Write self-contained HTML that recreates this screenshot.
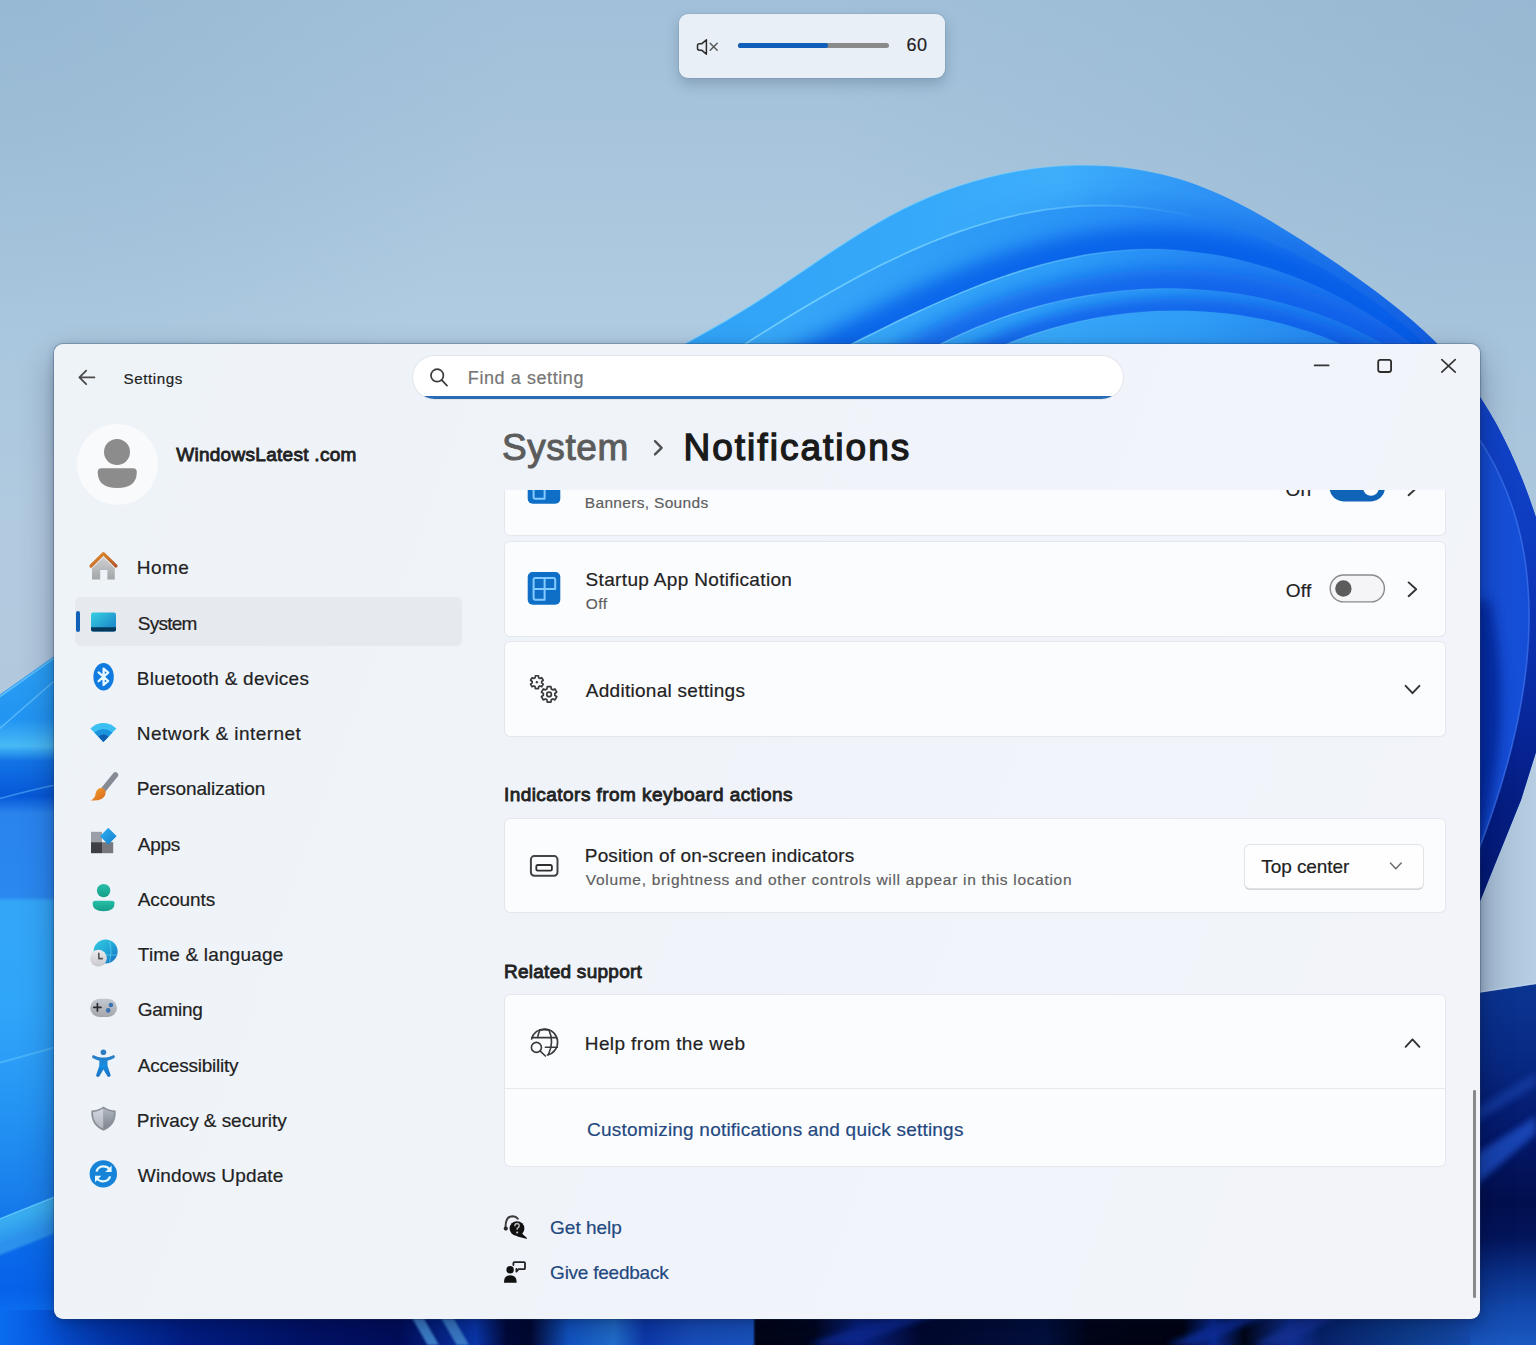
<!DOCTYPE html>
<html lang="en"><head><meta charset="utf-8"><title>Settings - Notifications</title>
<style>
*{box-sizing:border-box;margin:0;padding:0}
html,body{width:1536px;height:1345px;overflow:hidden;background:#a6c3dc}
body{font-family:"Liberation Sans",sans-serif;position:relative}
#root{position:absolute;left:0;top:0;width:1536px;height:1345px;overflow:hidden}
#wall,#ico{position:absolute;left:0;top:0}
.abs{position:absolute}
.t{position:absolute;white-space:nowrap;font-family:"Liberation Sans",sans-serif;-webkit-text-stroke:0.2px currentColor}
.s5{-webkit-text-stroke:0.85px currentColor}
.s10{-webkit-text-stroke:1.0px currentColor}
.s12{-webkit-text-stroke:1.35px currentColor}
#fly{left:679.4px;top:13.5px;width:265.2px;height:64.7px;border-radius:9px;background:#e9eff7;box-shadow:0 0 0 1px rgba(60,80,110,.10),0 6px 14px rgba(20,40,70,.22)}
#trk{left:737.6px;top:42.6px;width:151px;height:5.6px;border-radius:3px;background:#8a8a8a}
#trkf{left:737.6px;top:42.6px;width:90.6px;height:5.6px;border-radius:3px;background:#0f5fb8}
#win{left:54px;top:344px;width:1426px;height:975px;border-radius:9px;background:linear-gradient(110deg,#eef3f8 0%,#f0f4fa 50%,#f2f4fa 100%);box-shadow:0 0 0 1px rgba(40,60,90,.28),0 2px 8px rgba(0,10,40,.22),0 14px 34px rgba(0,10,40,.30)}
#srch{left:412.5px;top:355.5px;width:710px;height:43.5px;border-radius:21.75px;background:#fff;box-shadow:0 0 0 1px rgba(0,0,0,.06);overflow:hidden}
#srch:after{content:"";position:absolute;left:0;right:0;bottom:0;height:3px;background:#2a6ab4}
#ava{left:76.8px;top:423.8px;width:81.4px;height:81.4px;border-radius:50%;background:#f9fafb}
#sel{left:75.4px;top:597.3px;width:386.4px;height:49px;border-radius:6px;background:#e6e9ee}
#acc{left:75.8px;top:610.8px;width:4px;height:21px;border-radius:2px;background:#1060b8}
#clip{left:490px;top:490px;width:990px;height:829px;overflow:hidden}
.card{position:absolute;left:14.5px;width:940.8px;border-radius:5px;background:#fbfcfe;box-shadow:0 0 0 1px #e4e7ec}
#dd{left:1245px;top:844.5px;width:177.8px;height:43px;border-radius:5px;background:#fefefe;box-shadow:0 0 0 1px #e2e4e8,0 1.2px 0 0.6px #c8cacf}
#sb{left:1473.2px;top:1090px;width:2.6px;height:207.6px;border-radius:1.3px;background:#8a8a8c}
</style></head><body><div id="root">
<svg id="wall" width="1536" height="1345" viewBox="0 0 1536 1345">
<defs>
<linearGradient id="bg" gradientUnits="userSpaceOnUse" x1="0" y1="0" x2="0" y2="1345"><stop offset="0" stop-color="#a2c0d9"/><stop offset="0.1" stop-color="#a7c4dc"/><stop offset="0.25" stop-color="#b0cce2"/><stop offset="0.45" stop-color="#b2c9de"/><stop offset="0.7" stop-color="#b0c6db"/><stop offset="1" stop-color="#b0c6db"/></linearGradient>
<radialGradient id="bgl" gradientUnits="userSpaceOnUse" cx="0" cy="0" r="520"><stop offset="0" stop-color="#8fb3cf" stop-opacity="0.55"/><stop offset="1" stop-color="#8fb3cf" stop-opacity="0"/></radialGradient>
<radialGradient id="bgr" gradientUnits="userSpaceOnUse" cx="1536" cy="0" r="720"><stop offset="0" stop-color="#8fb1cd" stop-opacity="0.55"/><stop offset="1" stop-color="#8fb1cd" stop-opacity="0"/></radialGradient>
<linearGradient id="gw" gradientUnits="userSpaceOnUse" x1="1470" y1="0" x2="1536" y2="0"><stop offset="0" stop-color="#a2b9d0"/><stop offset="0.5" stop-color="#adc5db"/><stop offset="1" stop-color="#b6cde2"/></linearGradient>
<linearGradient id="g1" gradientUnits="userSpaceOnUse" x1="685" y1="0" x2="1536" y2="0"><stop offset="0" stop-color="#31a3f7"/><stop offset="0.25" stop-color="#35a8f9"/><stop offset="0.44" stop-color="#3eaefb"/><stop offset="0.6" stop-color="#2f96f6"/><stop offset="0.78" stop-color="#2278ee"/><stop offset="0.9" stop-color="#1a5ee2"/><stop offset="1" stop-color="#164fd6"/></linearGradient>
<linearGradient id="g2" gradientUnits="userSpaceOnUse" x1="747" y1="0" x2="1460" y2="0"><stop offset="0" stop-color="#38a8f8"/><stop offset="0.3" stop-color="#2e9cf6"/><stop offset="0.5" stop-color="#2a92f6"/><stop offset="0.7" stop-color="#2080f2"/><stop offset="1" stop-color="#1a66e8"/></linearGradient>
<linearGradient id="g3" gradientUnits="userSpaceOnUse" x1="852" y1="0" x2="1445" y2="0"><stop offset="0" stop-color="#38a8f8"/><stop offset="0.35" stop-color="#2e9ef8"/><stop offset="0.6" stop-color="#2588f4"/><stop offset="1" stop-color="#1a6aea"/></linearGradient>
<linearGradient id="g4" gradientUnits="userSpaceOnUse" x1="945" y1="0" x2="1420" y2="0"><stop offset="0" stop-color="#32a2f7"/><stop offset="0.45" stop-color="#2a96f6"/><stop offset="0.75" stop-color="#1f80f0"/><stop offset="1" stop-color="#1a6eea"/></linearGradient>
<linearGradient id="g5" gradientUnits="userSpaceOnUse" x1="1008" y1="0" x2="1380" y2="0"><stop offset="0" stop-color="#3aaaf8"/><stop offset="0.5" stop-color="#2f9cf6"/><stop offset="1" stop-color="#2080f0"/></linearGradient>
<linearGradient id="sh1" gradientUnits="userSpaceOnUse" x1="950" y1="0" x2="1300" y2="0"><stop offset="0" stop-color="#0a55de" stop-opacity="0"/><stop offset="1" stop-color="#0a55de" stop-opacity="0.45"/></linearGradient>
<linearGradient id="hl" gradientUnits="userSpaceOnUse" x1="700" y1="0" x2="1200" y2="0"><stop offset="0" stop-color="#7ad4ff" stop-opacity="0.9"/><stop offset="0.6" stop-color="#7ad4ff" stop-opacity="0.7"/><stop offset="1" stop-color="#7ad4ff" stop-opacity="0"/></linearGradient>
<filter id="b12" filterUnits="userSpaceOnUse" x="0" y="0" width="1536" height="1345"><feGaussianBlur stdDeviation="12"/></filter>
<filter id="b9" filterUnits="userSpaceOnUse" x="0" y="0" width="1536" height="1345"><feGaussianBlur stdDeviation="9"/></filter>
<filter id="b6" filterUnits="userSpaceOnUse" x="0" y="0" width="1536" height="1345"><feGaussianBlur stdDeviation="6"/></filter>
<filter id="b3" filterUnits="userSpaceOnUse" x="0" y="0" width="1536" height="1345"><feGaussianBlur stdDeviation="3"/></filter>
<filter id="b1" filterUnits="userSpaceOnUse" x="0" y="0" width="1536" height="1345"><feGaussianBlur stdDeviation="1"/></filter>
<clipPath id="c1"><path d="M620.1,382.1C628.4,376.6 637.0,371.2 645.6,366.1C654.2,361.0 663.0,356.0 671.7,351.1C680.5,346.1 689.3,341.3 698.1,336.4C706.9,331.5 715.7,326.6 724.4,321.6C733.1,316.5 741.7,311.3 750.2,306.0C758.7,300.6 767.2,295.1 775.5,289.5C783.9,283.9 792.2,278.2 800.6,272.6C808.9,266.9 817.2,261.2 825.6,255.6C833.9,250.0 842.3,244.5 850.8,239.1C859.2,233.7 867.8,228.5 876.5,223.5C885.1,218.4 893.9,213.6 902.9,209.1C911.9,204.6 921.0,200.4 930.3,196.5C939.6,192.7 949.1,189.1 958.6,185.9C968.2,182.7 977.9,179.9 987.7,177.4C997.5,174.9 1007.4,172.8 1017.4,171.0C1027.3,169.3 1037.3,167.9 1047.3,166.9C1057.3,166.0 1067.4,165.4 1077.4,165.2C1087.5,165.1 1097.5,165.3 1107.4,166.0C1117.4,166.7 1127.3,167.8 1137.2,169.4C1147.0,170.9 1156.8,172.9 1166.4,175.4C1176.1,177.9 1185.6,180.8 1195.0,184.2C1204.4,187.6 1213.7,191.5 1222.8,195.7C1231.9,199.9 1241.0,204.4 1249.9,209.2C1258.8,214.0 1267.6,219.1 1276.3,224.4C1285.0,229.6 1293.7,235.1 1302.2,240.6C1310.7,246.1 1319.2,251.7 1327.6,257.3C1336.0,263.0 1344.3,268.7 1352.5,274.5C1360.7,280.2 1368.8,286.1 1376.7,292.1C1384.7,298.1 1392.6,304.3 1400.3,310.6C1408.0,316.9 1415.6,323.4 1423.0,330.1C1430.4,336.8 1437.5,343.7 1444.3,351.0C1451.1,358.3 1457.5,365.9 1463.6,373.8C1469.7,381.7 1475.5,389.9 1480.9,398.3C1486.4,406.7 1491.5,415.3 1496.4,424.1C1501.2,433.0 1505.8,442.0 1510.0,451.1C1514.3,460.3 1518.3,469.6 1522.1,479.0C1525.9,488.4 1529.4,497.9 1532.6,507.4C1535.9,517.0 1539.0,526.6 1541.8,536.2C1544.6,545.8 1547.3,555.4 1549.7,565.0L1560,1100L620,1100Z"/></clipPath>
<clipPath id="c2"><path d="M691.2,378.7C697.2,374.9 703.1,371.1 709.1,367.2C715.1,363.3 721.2,359.4 727.2,355.5C733.3,351.6 739.4,347.7 745.6,343.8C751.7,339.8 757.9,335.9 764.1,332.0C770.4,328.1 776.6,324.2 782.9,320.3C789.2,316.4 795.5,312.5 801.9,308.7C808.3,304.9 814.7,301.1 821.1,297.4C827.5,293.7 834.0,290.0 840.5,286.4C847.0,282.8 853.6,279.2 860.1,275.7C866.7,272.3 873.3,268.9 880.0,265.5C886.6,262.2 893.3,259.0 900.0,255.9C906.7,252.8 913.4,249.8 920.2,246.9C927.0,243.9 933.8,241.2 940.6,238.5C947.5,235.8 954.3,233.3 961.2,230.9C968.1,228.5 975.1,226.3 982.0,224.2C989.0,222.1 996.0,220.1 1003.0,218.3C1010.1,216.5 1017.1,214.9 1024.2,213.5C1031.3,212.1 1038.4,210.8 1045.6,209.7C1052.7,208.7 1059.9,207.8 1067.1,207.1C1074.3,206.5 1081.6,206.0 1088.8,205.7C1096.1,205.5 1103.4,205.5 1110.7,205.7C1118.0,205.8 1125.4,206.2 1132.7,206.9C1140.0,207.5 1147.4,208.3 1154.7,209.3C1162.1,210.3 1169.4,211.5 1176.7,212.9C1184.0,214.3 1191.2,215.9 1198.5,217.7C1205.7,219.5 1212.9,221.4 1220.0,223.6C1227.1,225.7 1234.2,228.0 1241.2,230.5C1248.2,233.0 1255.1,235.6 1262.0,238.4C1268.8,241.2 1275.6,244.1 1282.3,247.2C1289.0,250.3 1295.5,253.5 1302.1,256.9C1308.6,260.3 1315.0,263.8 1321.4,267.5C1327.7,271.1 1334.0,274.9 1340.2,278.8C1346.4,282.7 1352.5,286.7 1358.6,290.8C1364.6,295.0 1370.6,299.2 1376.5,303.5C1382.4,307.9 1388.2,312.3 1393.9,316.9C1399.7,321.4 1405.4,326.1 1411.0,330.8C1416.6,335.5 1422.1,340.3 1427.5,345.2C1433.0,350.1 1438.4,355.0 1443.7,360.1C1449.0,365.1 1454.3,370.2 1459.5,375.3L1460,1100L690,1100Z"/></clipPath>
<clipPath id="c3"><path d="M790.5,375.1C795.8,372.5 801.0,369.9 806.3,367.2C811.6,364.5 816.9,361.8 822.3,359.1C827.6,356.4 833.0,353.6 838.4,350.9C843.7,348.1 849.1,345.4 854.6,342.7C860.0,339.9 865.4,337.2 870.9,334.5C876.3,331.7 881.8,329.0 887.3,326.3C892.8,323.6 898.4,321.0 903.9,318.3C909.4,315.7 915.0,313.1 920.6,310.5C926.2,307.9 931.8,305.4 937.4,302.9C943.0,300.4 948.6,298.0 954.3,295.6C959.9,293.2 965.6,290.9 971.3,288.6C977.0,286.3 982.7,284.1 988.4,282.0C994.2,279.9 999.9,277.9 1005.7,275.9C1011.4,273.9 1017.2,272.1 1023.0,270.3C1028.8,268.5 1034.6,266.8 1040.5,265.2C1046.3,263.6 1052.2,262.1 1058.0,260.7C1063.9,259.3 1069.8,258.1 1075.7,256.9C1081.6,255.7 1087.5,254.7 1093.4,253.8C1099.4,252.9 1105.3,252.1 1111.3,251.5C1117.3,250.8 1123.2,250.3 1129.2,249.9C1135.2,249.6 1141.2,249.4 1147.3,249.3C1153.3,249.2 1159.4,249.3 1165.4,249.6C1171.5,249.8 1177.5,250.2 1183.6,250.7C1189.6,251.3 1195.7,251.9 1201.7,252.8C1207.7,253.6 1213.8,254.5 1219.8,255.6C1225.8,256.7 1231.8,258.0 1237.8,259.3C1243.7,260.7 1249.7,262.2 1255.6,263.9C1261.5,265.5 1267.3,267.3 1273.2,269.2C1279.0,271.0 1284.8,273.1 1290.5,275.2C1296.2,277.4 1301.9,279.6 1307.5,282.0C1313.2,284.4 1318.7,286.9 1324.2,289.5C1329.7,292.2 1335.1,294.9 1340.5,297.7C1345.9,300.6 1351.2,303.5 1356.4,306.6C1361.7,309.6 1366.8,312.8 1372.0,316.0C1377.1,319.2 1382.1,322.6 1387.2,326.0C1392.2,329.4 1397.1,332.9 1402.0,336.4C1406.9,340.0 1411.7,343.6 1416.5,347.3C1421.3,351.0 1426.0,354.8 1430.7,358.6C1435.4,362.5 1440.0,366.3 1444.5,370.3L1445,1100L790,1100Z"/></clipPath>
<clipPath id="c4"><path d="M890.4,373.2C894.4,370.5 898.5,368.0 902.6,365.4C906.7,362.9 910.9,360.4 915.0,358.0C919.2,355.6 923.4,353.2 927.7,350.9C931.9,348.6 936.2,346.4 940.5,344.2C944.8,342.0 949.1,339.9 953.5,337.9C957.8,335.8 962.2,333.8 966.7,331.9C971.1,329.9 975.5,328.0 980.0,326.2C984.5,324.4 989.0,322.7 993.5,321.0C998.0,319.3 1002.5,317.6 1007.1,316.1C1011.6,314.5 1016.2,313.0 1020.8,311.6C1025.4,310.1 1030.0,308.8 1034.7,307.5C1039.3,306.2 1044.0,304.9 1048.6,303.7C1053.3,302.6 1058.0,301.5 1062.7,300.4C1067.4,299.4 1072.1,298.4 1076.8,297.5C1081.5,296.6 1086.2,295.7 1091.0,295.0C1095.7,294.2 1100.4,293.5 1105.2,292.9C1110.0,292.2 1114.7,291.7 1119.5,291.2C1124.2,290.7 1129.0,290.2 1133.8,289.9C1138.5,289.5 1143.3,289.2 1148.1,289.0C1152.9,288.8 1157.6,288.7 1162.4,288.6C1167.2,288.5 1172.0,288.5 1176.7,288.6C1181.5,288.7 1186.3,288.8 1191.0,289.1C1195.8,289.3 1200.6,289.6 1205.3,290.0C1210.1,290.3 1214.8,290.8 1219.5,291.3C1224.3,291.8 1229.0,292.4 1233.7,293.1C1238.4,293.8 1243.1,294.5 1247.8,295.3C1252.5,296.2 1257.2,297.1 1261.9,298.0C1266.5,299.0 1271.2,300.1 1275.8,301.2C1280.4,302.3 1285.0,303.6 1289.6,304.9C1294.2,306.1 1298.8,307.5 1303.4,309.0C1307.9,310.4 1312.5,311.9 1317.0,313.5C1321.5,315.1 1326.0,316.8 1330.4,318.6C1334.9,320.4 1339.3,322.2 1343.8,324.1C1348.2,326.1 1352.6,328.1 1356.9,330.2C1361.3,332.3 1365.6,334.4 1369.9,336.7C1374.2,338.9 1378.5,341.3 1382.7,343.7C1386.9,346.1 1391.1,348.6 1395.3,351.2C1399.5,353.8 1403.6,356.5 1407.7,359.2C1411.8,362.0 1415.8,364.8 1419.9,367.7L1420,1100L890,1100Z"/></clipPath>
<clipPath id="cR"><path d="M620.1,382.1C628.4,376.6 637.0,371.2 645.6,366.1C654.2,361.0 663.0,356.0 671.7,351.1C680.5,346.1 689.3,341.3 698.1,336.4C706.9,331.5 715.7,326.6 724.4,321.6C733.1,316.5 741.7,311.3 750.2,306.0C758.7,300.6 767.2,295.1 775.5,289.5C783.9,283.9 792.2,278.2 800.6,272.6C808.9,266.9 817.2,261.2 825.6,255.6C833.9,250.0 842.3,244.5 850.8,239.1C859.2,233.7 867.8,228.5 876.5,223.5C885.1,218.4 893.9,213.6 902.9,209.1C911.9,204.6 921.0,200.4 930.3,196.5C939.6,192.7 949.1,189.1 958.6,185.9C968.2,182.7 977.9,179.9 987.7,177.4C997.5,174.9 1007.4,172.8 1017.4,171.0C1027.3,169.3 1037.3,167.9 1047.3,166.9C1057.3,166.0 1067.4,165.4 1077.4,165.2C1087.5,165.1 1097.5,165.3 1107.4,166.0C1117.4,166.7 1127.3,167.8 1137.2,169.4C1147.0,170.9 1156.8,172.9 1166.4,175.4C1176.1,177.9 1185.6,180.8 1195.0,184.2C1204.4,187.6 1213.7,191.5 1222.8,195.7C1231.9,199.9 1241.0,204.4 1249.9,209.2C1258.8,214.0 1267.6,219.1 1276.3,224.4C1285.0,229.6 1293.7,235.1 1302.2,240.6C1310.7,246.1 1319.2,251.7 1327.6,257.3C1336.0,263.0 1344.3,268.7 1352.5,274.5C1360.7,280.2 1368.8,286.1 1376.7,292.1C1384.7,298.1 1392.6,304.3 1400.3,310.6C1408.0,316.9 1415.6,323.4 1423.0,330.1C1430.4,336.8 1437.5,343.7 1444.3,351.0C1451.1,358.3 1457.5,365.9 1463.6,373.8C1469.7,381.7 1475.5,389.9 1480.9,398.3C1486.4,406.7 1491.5,415.3 1496.4,424.1C1501.2,433.0 1505.8,442.0 1510.0,451.1C1514.3,460.3 1518.3,469.6 1522.1,479.0C1525.9,488.4 1529.4,497.9 1532.6,507.4C1535.9,517.0 1539.0,526.6 1541.8,536.2C1544.6,545.8 1547.3,555.4 1549.7,565.0L1560,745L1536,752L1521,800L1481,899L1470,925L1400,925L1400,344Z"/></clipPath>
<linearGradient id="gl" gradientUnits="userSpaceOnUse" x1="0" y1="650" x2="0" y2="1345"><stop offset="0" stop-color="#2ba2f5"/><stop offset="0.1" stop-color="#2294f2"/><stop offset="0.138" stop-color="#48baf6"/><stop offset="0.16" stop-color="#1273e6"/><stop offset="0.21" stop-color="#0758d8"/><stop offset="0.235" stop-color="#2a84ee"/><stop offset="0.355" stop-color="#2a88f0"/><stop offset="0.362" stop-color="#34a6f8"/><stop offset="0.5" stop-color="#30a6f9"/><stop offset="0.58" stop-color="#2c9ef7"/><stop offset="0.66" stop-color="#2494f4"/><stop offset="0.78" stop-color="#1a80ec"/><stop offset="0.86" stop-color="#0a6aea"/><stop offset="0.92" stop-color="#0762ea"/><stop offset="0.95" stop-color="#0a6cf0"/><stop offset="1" stop-color="#0a6cf0"/></linearGradient>
<linearGradient id="gcy" gradientUnits="userSpaceOnUse" x1="0" y1="1200" x2="14" y2="1240"><stop offset="0" stop-color="#4cc4f6"/><stop offset="0.5" stop-color="#3eb4f2"/><stop offset="1" stop-color="#2f96ee"/></linearGradient>
<linearGradient id="gll" gradientUnits="userSpaceOnUse" x1="0" y1="0" x2="60" y2="0"><stop offset="0" stop-color="#000a50" stop-opacity="0"/><stop offset="0.6" stop-color="#000a50" stop-opacity="0"/><stop offset="1" stop-color="#000a50" stop-opacity="0.22"/></linearGradient>
<linearGradient id="grv" gradientUnits="userSpaceOnUse" x1="0" y1="380" x2="0" y2="900"><stop offset="0" stop-color="#1246cc"/><stop offset="0.3" stop-color="#0e3cc0"/><stop offset="0.6" stop-color="#092aa2"/><stop offset="0.8" stop-color="#051e84"/><stop offset="1" stop-color="#041a74"/></linearGradient>
<linearGradient id="gr" gradientUnits="userSpaceOnUse" x1="1480" y1="0" x2="1530" y2="0"><stop offset="0" stop-color="#144cd2"/><stop offset="0.5" stop-color="#1650d8"/><stop offset="1" stop-color="#154ed6"/></linearGradient>
<linearGradient id="gn" gradientUnits="userSpaceOnUse" x1="0" y1="985" x2="0" y2="1345"><stop offset="0" stop-color="#0b3592"/><stop offset="0.2" stop-color="#082a84"/><stop offset="0.42" stop-color="#04186a"/><stop offset="0.6" stop-color="#020f4e"/><stop offset="0.7" stop-color="#03145a"/><stop offset="0.8" stop-color="#0a3088"/><stop offset="0.9" stop-color="#1248ac"/><stop offset="1" stop-color="#1a58c0"/></linearGradient>
<linearGradient id="gb" gradientUnits="userSpaceOnUse" x1="0" y1="0" x2="1536" y2="0"><stop offset="0" stop-color="#0a6cf0"/><stop offset="0.03" stop-color="#0658e0"/><stop offset="0.07" stop-color="#0338b4"/><stop offset="0.12" stop-color="#021f8a"/><stop offset="0.2" stop-color="#01126a"/><stop offset="0.26" stop-color="#010e5e"/><stop offset="0.31" stop-color="#0a3ab4"/><stop offset="0.33" stop-color="#02093a"/><stop offset="0.345" stop-color="#020830"/><stop offset="0.37" stop-color="#1258cc"/><stop offset="0.4" stop-color="#2474d6"/><stop offset="0.42" stop-color="#0d3cb4"/><stop offset="0.45" stop-color="#1a52c4"/><stop offset="0.49" stop-color="#1a58c8"/><stop offset="0.492" stop-color="#010414"/><stop offset="0.53" stop-color="#02061c"/><stop offset="0.56" stop-color="#0a2488"/><stop offset="0.6" stop-color="#02082e"/><stop offset="0.68" stop-color="#03103e"/><stop offset="0.71" stop-color="#010416"/><stop offset="0.77" stop-color="#01030f"/><stop offset="0.79" stop-color="#0d2e9c"/><stop offset="0.81" stop-color="#010514"/><stop offset="0.84" stop-color="#12349c"/><stop offset="0.86" stop-color="#07246e"/><stop offset="0.92" stop-color="#0f4296"/><stop offset="0.957" stop-color="#164eb4"/><stop offset="1" stop-color="#1a58c0"/></linearGradient>
</defs>
<rect width="1536" height="1345" fill="url(#bg)"/>
<rect width="1536" height="1345" fill="url(#bgl)"/>
<rect width="1536" height="1345" fill="url(#bgr)"/>
<rect x="1470" y="700" width="66" height="300" fill="url(#gw)"/>
<path d="M-5,698 L60,652 L60,1345 L-5,1345Z" fill="url(#gl)"/>
<path d="M-5,700 L60,654" stroke="#7fd0ff" stroke-width="1.5" opacity="0.7" fill="none"/>
<path d="M-5,732.5 L60,676" stroke="#6cc6ff" stroke-width="1.5" opacity="0.7" fill="none"/>
<path d="M-5,800 Q30,790 60,784" stroke="#58b4fb" stroke-width="1.5" opacity="0.6" fill="none"/>
<path d="M-5,1064 L60,1046" stroke="#58c0fb" stroke-width="2" opacity="0.6" fill="none"/>
<path d="M-5,1221 L60,1195 L60,1231 L-5,1257Z" fill="url(#gcy)" opacity="0.9" filter="url(#b1)"/>
<path d="M-5,1221 L60,1195" stroke="#6ad4ff" stroke-width="1.6" opacity="0.8"/>
<path d="M620.1,382.1C628.4,376.6 637.0,371.2 645.6,366.1C654.2,361.0 663.0,356.0 671.7,351.1C680.5,346.1 689.3,341.3 698.1,336.4C706.9,331.5 715.7,326.6 724.4,321.6C733.1,316.5 741.7,311.3 750.2,306.0C758.7,300.6 767.2,295.1 775.5,289.5C783.9,283.9 792.2,278.2 800.6,272.6C808.9,266.9 817.2,261.2 825.6,255.6C833.9,250.0 842.3,244.5 850.8,239.1C859.2,233.7 867.8,228.5 876.5,223.5C885.1,218.4 893.9,213.6 902.9,209.1C911.9,204.6 921.0,200.4 930.3,196.5C939.6,192.7 949.1,189.1 958.6,185.9C968.2,182.7 977.9,179.9 987.7,177.4C997.5,174.9 1007.4,172.8 1017.4,171.0C1027.3,169.3 1037.3,167.9 1047.3,166.9C1057.3,166.0 1067.4,165.4 1077.4,165.2C1087.5,165.1 1097.5,165.3 1107.4,166.0C1117.4,166.7 1127.3,167.8 1137.2,169.4C1147.0,170.9 1156.8,172.9 1166.4,175.4C1176.1,177.9 1185.6,180.8 1195.0,184.2C1204.4,187.6 1213.7,191.5 1222.8,195.7C1231.9,199.9 1241.0,204.4 1249.9,209.2C1258.8,214.0 1267.6,219.1 1276.3,224.4C1285.0,229.6 1293.7,235.1 1302.2,240.6C1310.7,246.1 1319.2,251.7 1327.6,257.3C1336.0,263.0 1344.3,268.7 1352.5,274.5C1360.7,280.2 1368.8,286.1 1376.7,292.1C1384.7,298.1 1392.6,304.3 1400.3,310.6C1408.0,316.9 1415.6,323.4 1423.0,330.1C1430.4,336.8 1437.5,343.7 1444.3,351.0C1451.1,358.3 1457.5,365.9 1463.6,373.8C1469.7,381.7 1475.5,389.9 1480.9,398.3C1486.4,406.7 1491.5,415.3 1496.4,424.1C1501.2,433.0 1505.8,442.0 1510.0,451.1C1514.3,460.3 1518.3,469.6 1522.1,479.0C1525.9,488.4 1529.4,497.9 1532.6,507.4C1535.9,517.0 1539.0,526.6 1541.8,536.2C1544.6,545.8 1547.3,555.4 1549.7,565.0L1560,745L1536,752L1521,800L1481,899L1470,925L620,925Z" fill="url(#g1)"/>
<path d="M620.1,382.1C628.4,376.6 637.0,371.2 645.6,366.1C654.2,361.0 663.0,356.0 671.7,351.1C680.5,346.1 689.3,341.3 698.1,336.4C706.9,331.5 715.7,326.6 724.4,321.6C733.1,316.5 741.7,311.3 750.2,306.0C758.7,300.6 767.2,295.1 775.5,289.5C783.9,283.9 792.2,278.2 800.6,272.6C808.9,266.9 817.2,261.2 825.6,255.6C833.9,250.0 842.3,244.5 850.8,239.1C859.2,233.7 867.8,228.5 876.5,223.5C885.1,218.4 893.9,213.6 902.9,209.1C911.9,204.6 921.0,200.4 930.3,196.5C939.6,192.7 949.1,189.1 958.6,185.9C968.2,182.7 977.9,179.9 987.7,177.4C997.5,174.9 1007.4,172.8 1017.4,171.0C1027.3,169.3 1037.3,167.9 1047.3,166.9C1057.3,166.0 1067.4,165.4 1077.4,165.2C1087.5,165.1 1097.5,165.3 1107.4,166.0C1117.4,166.7 1127.3,167.8 1137.2,169.4C1147.0,170.9 1156.8,172.9 1166.4,175.4C1176.1,177.9 1185.6,180.8 1195.0,184.2C1204.4,187.6 1213.7,191.5 1222.8,195.7C1231.9,199.9 1241.0,204.4 1249.9,209.2C1258.8,214.0 1267.6,219.1 1276.3,224.4C1285.0,229.6 1293.7,235.1 1302.2,240.6C1310.7,246.1 1319.2,251.7 1327.6,257.3C1336.0,263.0 1344.3,268.7 1352.5,274.5C1360.7,280.2 1368.8,286.1 1376.7,292.1C1384.7,298.1 1392.6,304.3 1400.3,310.6C1408.0,316.9 1415.6,323.4 1423.0,330.1C1430.4,336.8 1437.5,343.7 1444.3,351.0C1451.1,358.3 1457.5,365.9 1463.6,373.8C1469.7,381.7 1475.5,389.9 1480.9,398.3C1486.4,406.7 1491.5,415.3 1496.4,424.1C1501.2,433.0 1505.8,442.0 1510.0,451.1C1514.3,460.3 1518.3,469.6 1522.1,479.0C1525.9,488.4 1529.4,497.9 1532.6,507.4C1535.9,517.0 1539.0,526.6 1541.8,536.2C1544.6,545.8 1547.3,555.4 1549.7,565.0" stroke="url(#hl)" stroke-width="1.4" fill="none" opacity="0.7"/>
<g clip-path="url(#c1)"><path d="M691.2,378.7C697.2,374.9 703.1,371.1 709.1,367.2C715.1,363.3 721.2,359.4 727.2,355.5C733.3,351.6 739.4,347.7 745.6,343.8C751.7,339.8 757.9,335.9 764.1,332.0C770.4,328.1 776.6,324.2 782.9,320.3C789.2,316.4 795.5,312.5 801.9,308.7C808.3,304.9 814.7,301.1 821.1,297.4C827.5,293.7 834.0,290.0 840.5,286.4C847.0,282.8 853.6,279.2 860.1,275.7C866.7,272.3 873.3,268.9 880.0,265.5C886.6,262.2 893.3,259.0 900.0,255.9C906.7,252.8 913.4,249.8 920.2,246.9C927.0,243.9 933.8,241.2 940.6,238.5C947.5,235.8 954.3,233.3 961.2,230.9C968.1,228.5 975.1,226.3 982.0,224.2C989.0,222.1 996.0,220.1 1003.0,218.3C1010.1,216.5 1017.1,214.9 1024.2,213.5C1031.3,212.1 1038.4,210.8 1045.6,209.7C1052.7,208.7 1059.9,207.8 1067.1,207.1C1074.3,206.5 1081.6,206.0 1088.8,205.7C1096.1,205.5 1103.4,205.5 1110.7,205.7C1118.0,205.8 1125.4,206.2 1132.7,206.9C1140.0,207.5 1147.4,208.3 1154.7,209.3C1162.1,210.3 1169.4,211.5 1176.7,212.9C1184.0,214.3 1191.2,215.9 1198.5,217.7C1205.7,219.5 1212.9,221.4 1220.0,223.6C1227.1,225.7 1234.2,228.0 1241.2,230.5C1248.2,233.0 1255.1,235.6 1262.0,238.4C1268.8,241.2 1275.6,244.1 1282.3,247.2C1289.0,250.3 1295.5,253.5 1302.1,256.9C1308.6,260.3 1315.0,263.8 1321.4,267.5C1327.7,271.1 1334.0,274.9 1340.2,278.8C1346.4,282.7 1352.5,286.7 1358.6,290.8C1364.6,295.0 1370.6,299.2 1376.5,303.5C1382.4,307.9 1388.2,312.3 1393.9,316.9C1399.7,321.4 1405.4,326.1 1411.0,330.8C1416.6,335.5 1422.1,340.3 1427.5,345.2C1433.0,350.1 1438.4,355.0 1443.7,360.1C1449.0,365.1 1454.3,370.2 1459.5,375.3" stroke="url(#sh1)" stroke-width="22" fill="none" filter="url(#b9)"/></g>
<path d="M691.2,378.7C697.2,374.9 703.1,371.1 709.1,367.2C715.1,363.3 721.2,359.4 727.2,355.5C733.3,351.6 739.4,347.7 745.6,343.8C751.7,339.8 757.9,335.9 764.1,332.0C770.4,328.1 776.6,324.2 782.9,320.3C789.2,316.4 795.5,312.5 801.9,308.7C808.3,304.9 814.7,301.1 821.1,297.4C827.5,293.7 834.0,290.0 840.5,286.4C847.0,282.8 853.6,279.2 860.1,275.7C866.7,272.3 873.3,268.9 880.0,265.5C886.6,262.2 893.3,259.0 900.0,255.9C906.7,252.8 913.4,249.8 920.2,246.9C927.0,243.9 933.8,241.2 940.6,238.5C947.5,235.8 954.3,233.3 961.2,230.9C968.1,228.5 975.1,226.3 982.0,224.2C989.0,222.1 996.0,220.1 1003.0,218.3C1010.1,216.5 1017.1,214.9 1024.2,213.5C1031.3,212.1 1038.4,210.8 1045.6,209.7C1052.7,208.7 1059.9,207.8 1067.1,207.1C1074.3,206.5 1081.6,206.0 1088.8,205.7C1096.1,205.5 1103.4,205.5 1110.7,205.7C1118.0,205.8 1125.4,206.2 1132.7,206.9C1140.0,207.5 1147.4,208.3 1154.7,209.3C1162.1,210.3 1169.4,211.5 1176.7,212.9C1184.0,214.3 1191.2,215.9 1198.5,217.7C1205.7,219.5 1212.9,221.4 1220.0,223.6C1227.1,225.7 1234.2,228.0 1241.2,230.5C1248.2,233.0 1255.1,235.6 1262.0,238.4C1268.8,241.2 1275.6,244.1 1282.3,247.2C1289.0,250.3 1295.5,253.5 1302.1,256.9C1308.6,260.3 1315.0,263.8 1321.4,267.5C1327.7,271.1 1334.0,274.9 1340.2,278.8C1346.4,282.7 1352.5,286.7 1358.6,290.8C1364.6,295.0 1370.6,299.2 1376.5,303.5C1382.4,307.9 1388.2,312.3 1393.9,316.9C1399.7,321.4 1405.4,326.1 1411.0,330.8C1416.6,335.5 1422.1,340.3 1427.5,345.2C1433.0,350.1 1438.4,355.0 1443.7,360.1C1449.0,365.1 1454.3,370.2 1459.5,375.3L1460,600L690,600Z" fill="url(#g2)"/>
<g clip-path="url(#c2)"><path d="M790.5,375.1C795.8,372.5 801.0,369.9 806.3,367.2C811.6,364.5 816.9,361.8 822.3,359.1C827.6,356.4 833.0,353.6 838.4,350.9C843.7,348.1 849.1,345.4 854.6,342.7C860.0,339.9 865.4,337.2 870.9,334.5C876.3,331.7 881.8,329.0 887.3,326.3C892.8,323.6 898.4,321.0 903.9,318.3C909.4,315.7 915.0,313.1 920.6,310.5C926.2,307.9 931.8,305.4 937.4,302.9C943.0,300.4 948.6,298.0 954.3,295.6C959.9,293.2 965.6,290.9 971.3,288.6C977.0,286.3 982.7,284.1 988.4,282.0C994.2,279.9 999.9,277.9 1005.7,275.9C1011.4,273.9 1017.2,272.1 1023.0,270.3C1028.8,268.5 1034.6,266.8 1040.5,265.2C1046.3,263.6 1052.2,262.1 1058.0,260.7C1063.9,259.3 1069.8,258.1 1075.7,256.9C1081.6,255.7 1087.5,254.7 1093.4,253.8C1099.4,252.9 1105.3,252.1 1111.3,251.5C1117.3,250.8 1123.2,250.3 1129.2,249.9C1135.2,249.6 1141.2,249.4 1147.3,249.3C1153.3,249.2 1159.4,249.3 1165.4,249.6C1171.5,249.8 1177.5,250.2 1183.6,250.7C1189.6,251.3 1195.7,251.9 1201.7,252.8C1207.7,253.6 1213.8,254.5 1219.8,255.6C1225.8,256.7 1231.8,258.0 1237.8,259.3C1243.7,260.7 1249.7,262.2 1255.6,263.9C1261.5,265.5 1267.3,267.3 1273.2,269.2C1279.0,271.0 1284.8,273.1 1290.5,275.2C1296.2,277.4 1301.9,279.6 1307.5,282.0C1313.2,284.4 1318.7,286.9 1324.2,289.5C1329.7,292.2 1335.1,294.9 1340.5,297.7C1345.9,300.6 1351.2,303.5 1356.4,306.6C1361.7,309.6 1366.8,312.8 1372.0,316.0C1377.1,319.2 1382.1,322.6 1387.2,326.0C1392.2,329.4 1397.1,332.9 1402.0,336.4C1406.9,340.0 1411.7,343.6 1416.5,347.3C1421.3,351.0 1426.0,354.8 1430.7,358.6C1435.4,362.5 1440.0,366.3 1444.5,370.3" stroke="#0658e6" stroke-width="44" fill="none" filter="url(#b9)" opacity="0.78"/></g>
<path d="M691.2,378.7C697.2,374.9 703.1,371.1 709.1,367.2C715.1,363.3 721.2,359.4 727.2,355.5C733.3,351.6 739.4,347.7 745.6,343.8C751.7,339.8 757.9,335.9 764.1,332.0C770.4,328.1 776.6,324.2 782.9,320.3C789.2,316.4 795.5,312.5 801.9,308.7C808.3,304.9 814.7,301.1 821.1,297.4C827.5,293.7 834.0,290.0 840.5,286.4C847.0,282.8 853.6,279.2 860.1,275.7C866.7,272.3 873.3,268.9 880.0,265.5C886.6,262.2 893.3,259.0 900.0,255.9C906.7,252.8 913.4,249.8 920.2,246.9C927.0,243.9 933.8,241.2 940.6,238.5C947.5,235.8 954.3,233.3 961.2,230.9C968.1,228.5 975.1,226.3 982.0,224.2C989.0,222.1 996.0,220.1 1003.0,218.3C1010.1,216.5 1017.1,214.9 1024.2,213.5C1031.3,212.1 1038.4,210.8 1045.6,209.7C1052.7,208.7 1059.9,207.8 1067.1,207.1C1074.3,206.5 1081.6,206.0 1088.8,205.7C1096.1,205.5 1103.4,205.5 1110.7,205.7C1118.0,205.8 1125.4,206.2 1132.7,206.9C1140.0,207.5 1147.4,208.3 1154.7,209.3C1162.1,210.3 1169.4,211.5 1176.7,212.9C1184.0,214.3 1191.2,215.9 1198.5,217.7C1205.7,219.5 1212.9,221.4 1220.0,223.6C1227.1,225.7 1234.2,228.0 1241.2,230.5C1248.2,233.0 1255.1,235.6 1262.0,238.4C1268.8,241.2 1275.6,244.1 1282.3,247.2C1289.0,250.3 1295.5,253.5 1302.1,256.9C1308.6,260.3 1315.0,263.8 1321.4,267.5C1327.7,271.1 1334.0,274.9 1340.2,278.8C1346.4,282.7 1352.5,286.7 1358.6,290.8C1364.6,295.0 1370.6,299.2 1376.5,303.5C1382.4,307.9 1388.2,312.3 1393.9,316.9C1399.7,321.4 1405.4,326.1 1411.0,330.8C1416.6,335.5 1422.1,340.3 1427.5,345.2C1433.0,350.1 1438.4,355.0 1443.7,360.1C1449.0,365.1 1454.3,370.2 1459.5,375.3" stroke="url(#hl)" stroke-width="1.7" fill="none"/>
<path d="M790.5,375.1C795.8,372.5 801.0,369.9 806.3,367.2C811.6,364.5 816.9,361.8 822.3,359.1C827.6,356.4 833.0,353.6 838.4,350.9C843.7,348.1 849.1,345.4 854.6,342.7C860.0,339.9 865.4,337.2 870.9,334.5C876.3,331.7 881.8,329.0 887.3,326.3C892.8,323.6 898.4,321.0 903.9,318.3C909.4,315.7 915.0,313.1 920.6,310.5C926.2,307.9 931.8,305.4 937.4,302.9C943.0,300.4 948.6,298.0 954.3,295.6C959.9,293.2 965.6,290.9 971.3,288.6C977.0,286.3 982.7,284.1 988.4,282.0C994.2,279.9 999.9,277.9 1005.7,275.9C1011.4,273.9 1017.2,272.1 1023.0,270.3C1028.8,268.5 1034.6,266.8 1040.5,265.2C1046.3,263.6 1052.2,262.1 1058.0,260.7C1063.9,259.3 1069.8,258.1 1075.7,256.9C1081.6,255.7 1087.5,254.7 1093.4,253.8C1099.4,252.9 1105.3,252.1 1111.3,251.5C1117.3,250.8 1123.2,250.3 1129.2,249.9C1135.2,249.6 1141.2,249.4 1147.3,249.3C1153.3,249.2 1159.4,249.3 1165.4,249.6C1171.5,249.8 1177.5,250.2 1183.6,250.7C1189.6,251.3 1195.7,251.9 1201.7,252.8C1207.7,253.6 1213.8,254.5 1219.8,255.6C1225.8,256.7 1231.8,258.0 1237.8,259.3C1243.7,260.7 1249.7,262.2 1255.6,263.9C1261.5,265.5 1267.3,267.3 1273.2,269.2C1279.0,271.0 1284.8,273.1 1290.5,275.2C1296.2,277.4 1301.9,279.6 1307.5,282.0C1313.2,284.4 1318.7,286.9 1324.2,289.5C1329.7,292.2 1335.1,294.9 1340.5,297.7C1345.9,300.6 1351.2,303.5 1356.4,306.6C1361.7,309.6 1366.8,312.8 1372.0,316.0C1377.1,319.2 1382.1,322.6 1387.2,326.0C1392.2,329.4 1397.1,332.9 1402.0,336.4C1406.9,340.0 1411.7,343.6 1416.5,347.3C1421.3,351.0 1426.0,354.8 1430.7,358.6C1435.4,362.5 1440.0,366.3 1444.5,370.3L1445,600L790,600Z" fill="url(#g3)"/>
<g clip-path="url(#c3)"><path d="M890.4,373.2C894.4,370.5 898.5,368.0 902.6,365.4C906.7,362.9 910.9,360.4 915.0,358.0C919.2,355.6 923.4,353.2 927.7,350.9C931.9,348.6 936.2,346.4 940.5,344.2C944.8,342.0 949.1,339.9 953.5,337.9C957.8,335.8 962.2,333.8 966.7,331.9C971.1,329.9 975.5,328.0 980.0,326.2C984.5,324.4 989.0,322.7 993.5,321.0C998.0,319.3 1002.5,317.6 1007.1,316.1C1011.6,314.5 1016.2,313.0 1020.8,311.6C1025.4,310.1 1030.0,308.8 1034.7,307.5C1039.3,306.2 1044.0,304.9 1048.6,303.7C1053.3,302.6 1058.0,301.5 1062.7,300.4C1067.4,299.4 1072.1,298.4 1076.8,297.5C1081.5,296.6 1086.2,295.7 1091.0,295.0C1095.7,294.2 1100.4,293.5 1105.2,292.9C1110.0,292.2 1114.7,291.7 1119.5,291.2C1124.2,290.7 1129.0,290.2 1133.8,289.9C1138.5,289.5 1143.3,289.2 1148.1,289.0C1152.9,288.8 1157.6,288.7 1162.4,288.6C1167.2,288.5 1172.0,288.5 1176.7,288.6C1181.5,288.7 1186.3,288.8 1191.0,289.1C1195.8,289.3 1200.6,289.6 1205.3,290.0C1210.1,290.3 1214.8,290.8 1219.5,291.3C1224.3,291.8 1229.0,292.4 1233.7,293.1C1238.4,293.8 1243.1,294.5 1247.8,295.3C1252.5,296.2 1257.2,297.1 1261.9,298.0C1266.5,299.0 1271.2,300.1 1275.8,301.2C1280.4,302.3 1285.0,303.6 1289.6,304.9C1294.2,306.1 1298.8,307.5 1303.4,309.0C1307.9,310.4 1312.5,311.9 1317.0,313.5C1321.5,315.1 1326.0,316.8 1330.4,318.6C1334.9,320.4 1339.3,322.2 1343.8,324.1C1348.2,326.1 1352.6,328.1 1356.9,330.2C1361.3,332.3 1365.6,334.4 1369.9,336.7C1374.2,338.9 1378.5,341.3 1382.7,343.7C1386.9,346.1 1391.1,348.6 1395.3,351.2C1399.5,353.8 1403.6,356.5 1407.7,359.2C1411.8,362.0 1415.8,364.8 1419.9,367.7" stroke="#0a5ce8" stroke-width="38" fill="none" filter="url(#b9)" opacity="0.78"/></g>
<path d="M790.5,375.1C795.8,372.5 801.0,369.9 806.3,367.2C811.6,364.5 816.9,361.8 822.3,359.1C827.6,356.4 833.0,353.6 838.4,350.9C843.7,348.1 849.1,345.4 854.6,342.7C860.0,339.9 865.4,337.2 870.9,334.5C876.3,331.7 881.8,329.0 887.3,326.3C892.8,323.6 898.4,321.0 903.9,318.3C909.4,315.7 915.0,313.1 920.6,310.5C926.2,307.9 931.8,305.4 937.4,302.9C943.0,300.4 948.6,298.0 954.3,295.6C959.9,293.2 965.6,290.9 971.3,288.6C977.0,286.3 982.7,284.1 988.4,282.0C994.2,279.9 999.9,277.9 1005.7,275.9C1011.4,273.9 1017.2,272.1 1023.0,270.3C1028.8,268.5 1034.6,266.8 1040.5,265.2C1046.3,263.6 1052.2,262.1 1058.0,260.7C1063.9,259.3 1069.8,258.1 1075.7,256.9C1081.6,255.7 1087.5,254.7 1093.4,253.8C1099.4,252.9 1105.3,252.1 1111.3,251.5C1117.3,250.8 1123.2,250.3 1129.2,249.9C1135.2,249.6 1141.2,249.4 1147.3,249.3C1153.3,249.2 1159.4,249.3 1165.4,249.6C1171.5,249.8 1177.5,250.2 1183.6,250.7C1189.6,251.3 1195.7,251.9 1201.7,252.8C1207.7,253.6 1213.8,254.5 1219.8,255.6C1225.8,256.7 1231.8,258.0 1237.8,259.3C1243.7,260.7 1249.7,262.2 1255.6,263.9C1261.5,265.5 1267.3,267.3 1273.2,269.2C1279.0,271.0 1284.8,273.1 1290.5,275.2C1296.2,277.4 1301.9,279.6 1307.5,282.0C1313.2,284.4 1318.7,286.9 1324.2,289.5C1329.7,292.2 1335.1,294.9 1340.5,297.7C1345.9,300.6 1351.2,303.5 1356.4,306.6C1361.7,309.6 1366.8,312.8 1372.0,316.0C1377.1,319.2 1382.1,322.6 1387.2,326.0C1392.2,329.4 1397.1,332.9 1402.0,336.4C1406.9,340.0 1411.7,343.6 1416.5,347.3C1421.3,351.0 1426.0,354.8 1430.7,358.6C1435.4,362.5 1440.0,366.3 1444.5,370.3" stroke="url(#hl)" stroke-width="1.5" fill="none"/>
<path d="M890.4,373.2C894.4,370.5 898.5,368.0 902.6,365.4C906.7,362.9 910.9,360.4 915.0,358.0C919.2,355.6 923.4,353.2 927.7,350.9C931.9,348.6 936.2,346.4 940.5,344.2C944.8,342.0 949.1,339.9 953.5,337.9C957.8,335.8 962.2,333.8 966.7,331.9C971.1,329.9 975.5,328.0 980.0,326.2C984.5,324.4 989.0,322.7 993.5,321.0C998.0,319.3 1002.5,317.6 1007.1,316.1C1011.6,314.5 1016.2,313.0 1020.8,311.6C1025.4,310.1 1030.0,308.8 1034.7,307.5C1039.3,306.2 1044.0,304.9 1048.6,303.7C1053.3,302.6 1058.0,301.5 1062.7,300.4C1067.4,299.4 1072.1,298.4 1076.8,297.5C1081.5,296.6 1086.2,295.7 1091.0,295.0C1095.7,294.2 1100.4,293.5 1105.2,292.9C1110.0,292.2 1114.7,291.7 1119.5,291.2C1124.2,290.7 1129.0,290.2 1133.8,289.9C1138.5,289.5 1143.3,289.2 1148.1,289.0C1152.9,288.8 1157.6,288.7 1162.4,288.6C1167.2,288.5 1172.0,288.5 1176.7,288.6C1181.5,288.7 1186.3,288.8 1191.0,289.1C1195.8,289.3 1200.6,289.6 1205.3,290.0C1210.1,290.3 1214.8,290.8 1219.5,291.3C1224.3,291.8 1229.0,292.4 1233.7,293.1C1238.4,293.8 1243.1,294.5 1247.8,295.3C1252.5,296.2 1257.2,297.1 1261.9,298.0C1266.5,299.0 1271.2,300.1 1275.8,301.2C1280.4,302.3 1285.0,303.6 1289.6,304.9C1294.2,306.1 1298.8,307.5 1303.4,309.0C1307.9,310.4 1312.5,311.9 1317.0,313.5C1321.5,315.1 1326.0,316.8 1330.4,318.6C1334.9,320.4 1339.3,322.2 1343.8,324.1C1348.2,326.1 1352.6,328.1 1356.9,330.2C1361.3,332.3 1365.6,334.4 1369.9,336.7C1374.2,338.9 1378.5,341.3 1382.7,343.7C1386.9,346.1 1391.1,348.6 1395.3,351.2C1399.5,353.8 1403.6,356.5 1407.7,359.2C1411.8,362.0 1415.8,364.8 1419.9,367.7L1420,600L890,600Z" fill="url(#g4)"/>
<g clip-path="url(#c4)"><path d="M950.0,371.8C953.3,369.9 956.7,368.0 960.0,366.2C963.4,364.3 966.8,362.6 970.2,360.8C973.6,359.1 977.0,357.3 980.5,355.7C984.0,354.0 987.4,352.4 990.9,350.8C994.4,349.3 998.0,347.7 1001.5,346.2C1005.1,344.8 1008.6,343.3 1012.2,341.9C1015.8,340.5 1019.4,339.2 1023.0,337.9C1026.6,336.6 1030.3,335.3 1033.9,334.1C1037.6,332.9 1041.3,331.7 1045.0,330.6C1048.7,329.5 1052.4,328.4 1056.1,327.3C1059.8,326.3 1063.5,325.3 1067.3,324.4C1071.0,323.5 1074.8,322.6 1078.5,321.7C1082.3,320.9 1086.1,320.1 1089.9,319.3C1093.6,318.6 1097.4,317.9 1101.2,317.2C1105.1,316.6 1108.9,316.0 1112.7,315.4C1116.5,314.9 1120.3,314.4 1124.2,313.9C1128.0,313.4 1131.8,313.0 1135.7,312.7C1139.5,312.3 1143.3,312.0 1147.2,311.7C1151.0,311.5 1154.9,311.3 1158.7,311.1C1162.6,310.9 1166.4,310.8 1170.3,310.7C1174.1,310.7 1178.0,310.7 1181.8,310.7C1185.7,310.7 1189.5,310.8 1193.4,311.0C1197.2,311.1 1201.1,311.3 1204.9,311.5C1208.7,311.8 1212.6,312.1 1216.4,312.4C1220.2,312.8 1224.0,313.2 1227.8,313.6C1231.7,314.1 1235.5,314.6 1239.3,315.1C1243.1,315.7 1246.8,316.3 1250.6,316.9C1254.4,317.6 1258.2,318.3 1261.9,319.1C1265.7,319.8 1269.4,320.7 1273.2,321.5C1276.9,322.4 1280.6,323.3 1284.3,324.3C1288.0,325.3 1291.7,326.3 1295.4,327.4C1299.1,328.5 1302.7,329.6 1306.4,330.8C1310.0,332.0 1313.6,333.3 1317.2,334.6C1320.8,335.9 1324.4,337.3 1328.0,338.7C1331.6,340.1 1335.1,341.6 1338.7,343.1C1342.2,344.6 1345.7,346.2 1349.2,347.9C1352.7,349.5 1356.1,351.2 1359.6,353.0C1363.0,354.7 1366.4,356.5 1369.8,358.4C1373.2,360.3 1376.5,362.2 1379.9,364.2" stroke="#0a5ce8" stroke-width="26" fill="none" filter="url(#b6)" opacity="0.78"/></g>
<path d="M890.4,373.2C894.4,370.5 898.5,368.0 902.6,365.4C906.7,362.9 910.9,360.4 915.0,358.0C919.2,355.6 923.4,353.2 927.7,350.9C931.9,348.6 936.2,346.4 940.5,344.2C944.8,342.0 949.1,339.9 953.5,337.9C957.8,335.8 962.2,333.8 966.7,331.9C971.1,329.9 975.5,328.0 980.0,326.2C984.5,324.4 989.0,322.7 993.5,321.0C998.0,319.3 1002.5,317.6 1007.1,316.1C1011.6,314.5 1016.2,313.0 1020.8,311.6C1025.4,310.1 1030.0,308.8 1034.7,307.5C1039.3,306.2 1044.0,304.9 1048.6,303.7C1053.3,302.6 1058.0,301.5 1062.7,300.4C1067.4,299.4 1072.1,298.4 1076.8,297.5C1081.5,296.6 1086.2,295.7 1091.0,295.0C1095.7,294.2 1100.4,293.5 1105.2,292.9C1110.0,292.2 1114.7,291.7 1119.5,291.2C1124.2,290.7 1129.0,290.2 1133.8,289.9C1138.5,289.5 1143.3,289.2 1148.1,289.0C1152.9,288.8 1157.6,288.7 1162.4,288.6C1167.2,288.5 1172.0,288.5 1176.7,288.6C1181.5,288.7 1186.3,288.8 1191.0,289.1C1195.8,289.3 1200.6,289.6 1205.3,290.0C1210.1,290.3 1214.8,290.8 1219.5,291.3C1224.3,291.8 1229.0,292.4 1233.7,293.1C1238.4,293.8 1243.1,294.5 1247.8,295.3C1252.5,296.2 1257.2,297.1 1261.9,298.0C1266.5,299.0 1271.2,300.1 1275.8,301.2C1280.4,302.3 1285.0,303.6 1289.6,304.9C1294.2,306.1 1298.8,307.5 1303.4,309.0C1307.9,310.4 1312.5,311.9 1317.0,313.5C1321.5,315.1 1326.0,316.8 1330.4,318.6C1334.9,320.4 1339.3,322.2 1343.8,324.1C1348.2,326.1 1352.6,328.1 1356.9,330.2C1361.3,332.3 1365.6,334.4 1369.9,336.7C1374.2,338.9 1378.5,341.3 1382.7,343.7C1386.9,346.1 1391.1,348.6 1395.3,351.2C1399.5,353.8 1403.6,356.5 1407.7,359.2C1411.8,362.0 1415.8,364.8 1419.9,367.7" stroke="url(#hl)" stroke-width="1.3" fill="none" opacity="0.8"/>
<path d="M950.0,371.8C953.3,369.9 956.7,368.0 960.0,366.2C963.4,364.3 966.8,362.6 970.2,360.8C973.6,359.1 977.0,357.3 980.5,355.7C984.0,354.0 987.4,352.4 990.9,350.8C994.4,349.3 998.0,347.7 1001.5,346.2C1005.1,344.8 1008.6,343.3 1012.2,341.9C1015.8,340.5 1019.4,339.2 1023.0,337.9C1026.6,336.6 1030.3,335.3 1033.9,334.1C1037.6,332.9 1041.3,331.7 1045.0,330.6C1048.7,329.5 1052.4,328.4 1056.1,327.3C1059.8,326.3 1063.5,325.3 1067.3,324.4C1071.0,323.5 1074.8,322.6 1078.5,321.7C1082.3,320.9 1086.1,320.1 1089.9,319.3C1093.6,318.6 1097.4,317.9 1101.2,317.2C1105.1,316.6 1108.9,316.0 1112.7,315.4C1116.5,314.9 1120.3,314.4 1124.2,313.9C1128.0,313.4 1131.8,313.0 1135.7,312.7C1139.5,312.3 1143.3,312.0 1147.2,311.7C1151.0,311.5 1154.9,311.3 1158.7,311.1C1162.6,310.9 1166.4,310.8 1170.3,310.7C1174.1,310.7 1178.0,310.7 1181.8,310.7C1185.7,310.7 1189.5,310.8 1193.4,311.0C1197.2,311.1 1201.1,311.3 1204.9,311.5C1208.7,311.8 1212.6,312.1 1216.4,312.4C1220.2,312.8 1224.0,313.2 1227.8,313.6C1231.7,314.1 1235.5,314.6 1239.3,315.1C1243.1,315.7 1246.8,316.3 1250.6,316.9C1254.4,317.6 1258.2,318.3 1261.9,319.1C1265.7,319.8 1269.4,320.7 1273.2,321.5C1276.9,322.4 1280.6,323.3 1284.3,324.3C1288.0,325.3 1291.7,326.3 1295.4,327.4C1299.1,328.5 1302.7,329.6 1306.4,330.8C1310.0,332.0 1313.6,333.3 1317.2,334.6C1320.8,335.9 1324.4,337.3 1328.0,338.7C1331.6,340.1 1335.1,341.6 1338.7,343.1C1342.2,344.6 1345.7,346.2 1349.2,347.9C1352.7,349.5 1356.1,351.2 1359.6,353.0C1363.0,354.7 1366.4,356.5 1369.8,358.4C1373.2,360.3 1376.5,362.2 1379.9,364.2L1380,600L950,600Z" fill="url(#g5)"/>
<path d="M950.0,371.8C953.3,369.9 956.7,368.0 960.0,366.2C963.4,364.3 966.8,362.6 970.2,360.8C973.6,359.1 977.0,357.3 980.5,355.7C984.0,354.0 987.4,352.4 990.9,350.8C994.4,349.3 998.0,347.7 1001.5,346.2C1005.1,344.8 1008.6,343.3 1012.2,341.9C1015.8,340.5 1019.4,339.2 1023.0,337.9C1026.6,336.6 1030.3,335.3 1033.9,334.1C1037.6,332.9 1041.3,331.7 1045.0,330.6C1048.7,329.5 1052.4,328.4 1056.1,327.3C1059.8,326.3 1063.5,325.3 1067.3,324.4C1071.0,323.5 1074.8,322.6 1078.5,321.7C1082.3,320.9 1086.1,320.1 1089.9,319.3C1093.6,318.6 1097.4,317.9 1101.2,317.2C1105.1,316.6 1108.9,316.0 1112.7,315.4C1116.5,314.9 1120.3,314.4 1124.2,313.9C1128.0,313.4 1131.8,313.0 1135.7,312.7C1139.5,312.3 1143.3,312.0 1147.2,311.7C1151.0,311.5 1154.9,311.3 1158.7,311.1C1162.6,310.9 1166.4,310.8 1170.3,310.7C1174.1,310.7 1178.0,310.7 1181.8,310.7C1185.7,310.7 1189.5,310.8 1193.4,311.0C1197.2,311.1 1201.1,311.3 1204.9,311.5C1208.7,311.8 1212.6,312.1 1216.4,312.4C1220.2,312.8 1224.0,313.2 1227.8,313.6C1231.7,314.1 1235.5,314.6 1239.3,315.1C1243.1,315.7 1246.8,316.3 1250.6,316.9C1254.4,317.6 1258.2,318.3 1261.9,319.1C1265.7,319.8 1269.4,320.7 1273.2,321.5C1276.9,322.4 1280.6,323.3 1284.3,324.3C1288.0,325.3 1291.7,326.3 1295.4,327.4C1299.1,328.5 1302.7,329.6 1306.4,330.8C1310.0,332.0 1313.6,333.3 1317.2,334.6C1320.8,335.9 1324.4,337.3 1328.0,338.7C1331.6,340.1 1335.1,341.6 1338.7,343.1C1342.2,344.6 1345.7,346.2 1349.2,347.9C1352.7,349.5 1356.1,351.2 1359.6,353.0C1363.0,354.7 1366.4,356.5 1369.8,358.4C1373.2,360.3 1376.5,362.2 1379.9,364.2" stroke="url(#hl)" stroke-width="1.2" fill="none" opacity="0.7"/>
<g clip-path="url(#cR)"><rect x="1466" y="340" width="80" height="600" fill="url(#grv)"/>
<path d="M1465.1,419.7C1467.8,423.2 1470.5,426.7 1473.0,430.2C1475.5,433.7 1478.0,437.3 1480.3,440.8C1482.6,444.4 1484.9,448.0 1487.0,451.7C1489.2,455.3 1491.2,459.0 1493.2,462.6C1495.2,466.3 1497.1,470.0 1498.8,473.8C1500.6,477.5 1502.3,481.3 1503.9,485.1C1505.6,488.8 1507.1,492.7 1508.5,496.5C1510.0,500.3 1511.3,504.2 1512.6,508.0C1513.9,511.9 1515.1,515.8 1516.2,519.7C1517.3,523.6 1518.4,527.5 1519.3,531.5C1520.3,535.4 1521.2,539.4 1522.0,543.3C1522.8,547.3 1523.5,551.3 1524.2,555.3C1524.9,559.3 1525.4,563.3 1526.0,567.4C1526.5,571.4 1526.9,575.4 1527.3,579.5C1527.7,583.5 1528.0,587.6 1528.3,591.7C1528.5,595.7 1528.7,599.8 1528.9,603.9C1529.0,608.0 1529.1,612.1 1529.1,616.2C1529.1,620.3 1529.0,624.4 1528.9,628.5C1528.8,632.6 1528.6,636.7 1528.4,640.9C1528.1,645.0 1527.9,649.1 1527.5,653.2C1527.2,657.3 1526.8,661.5 1526.4,665.6C1525.9,669.7 1525.4,673.8 1524.9,678.0C1524.3,682.1 1523.8,686.2 1523.1,690.3C1522.5,694.5 1521.8,698.6 1521.1,702.7C1520.4,706.8 1519.6,710.9 1518.8,715.0C1518.0,719.1 1517.1,723.2 1516.2,727.3C1515.3,731.4 1514.4,735.5 1513.4,739.5C1512.5,743.6 1511.5,747.7 1510.4,751.7C1509.4,755.8 1508.3,759.8 1507.2,763.9C1506.1,767.9 1505.0,771.9 1503.8,775.9C1502.6,779.9 1501.4,783.9 1500.2,787.9C1499.0,791.9 1497.7,795.8 1496.5,799.8C1495.2,803.7 1493.9,807.6 1492.6,811.5C1491.2,815.5 1489.9,819.3 1488.5,823.2C1487.2,827.1 1485.8,830.9 1484.4,834.8C1483.0,838.6 1481.5,842.4 1480.1,846.2C1478.7,850.0 1477.2,853.8 1475.7,857.5C1474.3,861.2 1472.8,865.0 1471.3,868.7C1469.8,872.4 1468.3,876.0 1466.8,879.7Z" fill="url(#gr)"/>
<path d="M1466,600 L1490,600 Q1512,700 1490,800 L1476,860 L1466,880Z" fill="#062494" opacity="0.75" filter="url(#b6)"/>
<path d="M1465.1,419.7C1467.8,423.2 1470.5,426.7 1473.0,430.2C1475.5,433.7 1478.0,437.3 1480.3,440.8C1482.6,444.4 1484.9,448.0 1487.0,451.7C1489.2,455.3 1491.2,459.0 1493.2,462.6C1495.2,466.3 1497.1,470.0 1498.8,473.8C1500.6,477.5 1502.3,481.3 1503.9,485.1C1505.6,488.8 1507.1,492.7 1508.5,496.5C1510.0,500.3 1511.3,504.2 1512.6,508.0C1513.9,511.9 1515.1,515.8 1516.2,519.7C1517.3,523.6 1518.4,527.5 1519.3,531.5C1520.3,535.4 1521.2,539.4 1522.0,543.3C1522.8,547.3 1523.5,551.3 1524.2,555.3C1524.9,559.3 1525.4,563.3 1526.0,567.4C1526.5,571.4 1526.9,575.4 1527.3,579.5C1527.7,583.5 1528.0,587.6 1528.3,591.7C1528.5,595.7 1528.7,599.8 1528.9,603.9C1529.0,608.0 1529.1,612.1 1529.1,616.2C1529.1,620.3 1529.0,624.4 1528.9,628.5C1528.8,632.6 1528.6,636.7 1528.4,640.9C1528.1,645.0 1527.9,649.1 1527.5,653.2C1527.2,657.3 1526.8,661.5 1526.4,665.6C1525.9,669.7 1525.4,673.8 1524.9,678.0C1524.3,682.1 1523.8,686.2 1523.1,690.3C1522.5,694.5 1521.8,698.6 1521.1,702.7C1520.4,706.8 1519.6,710.9 1518.8,715.0C1518.0,719.1 1517.1,723.2 1516.2,727.3C1515.3,731.4 1514.4,735.5 1513.4,739.5C1512.5,743.6 1511.5,747.7 1510.4,751.7C1509.4,755.8 1508.3,759.8 1507.2,763.9C1506.1,767.9 1505.0,771.9 1503.8,775.9C1502.6,779.9 1501.4,783.9 1500.2,787.9C1499.0,791.9 1497.7,795.8 1496.5,799.8C1495.2,803.7 1493.9,807.6 1492.6,811.5C1491.2,815.5 1489.9,819.3 1488.5,823.2C1487.2,827.1 1485.8,830.9 1484.4,834.8C1483.0,838.6 1481.5,842.4 1480.1,846.2C1478.7,850.0 1477.2,853.8 1475.7,857.5C1474.3,861.2 1472.8,865.0 1471.3,868.7C1469.8,872.4 1468.3,876.0 1466.8,879.7" stroke="#3f74ec" stroke-width="1.6" fill="none" opacity="0.7"/>
</g>
<rect x="0" y="1310" width="1536" height="35" fill="url(#gb)"/>
<path d="M407.5,1310 L419.0,1310 L439.0,1345 L427.5,1345Z" fill="#4690dc" opacity="0.92" filter="url(#b1)"/>
<path d="M436.5,1310 L449.0,1310 L469.0,1345 L456.5,1345Z" fill="#448cda" opacity="0.9" filter="url(#b1)"/>
<path d="M905,1310 L950,1310 L852,1345 L807,1345Z" fill="#0c2a98" opacity="0.9" filter="url(#b3)"/>
<path d="M1250,1310 L1280,1310 L1196,1345 L1166,1345Z" fill="#0f32a4" opacity="0.9" filter="url(#b3)"/>
<path d="M1318,1310 L1348,1310 L1284,1345 L1254,1345Z" fill="#13369e" opacity="0.9" filter="url(#b3)"/>
<path d="M1470,994 L1536,984 L1536,1345 L1470,1345Z" fill="url(#gn)"/>
<path d="M1470,1112 L1536,1072 L1536,1086 L1470,1126Z" fill="#1a48b8" opacity="0.5" filter="url(#b3)"/>
<path d="M1470,1158 L1536,1116 L1536,1134 L1470,1190Z" fill="#1c50c4" opacity="0.8" filter="url(#b3)"/>
<path d="M1470,993.5 L1536,983.5" stroke="#c6dcf2" stroke-width="1.5" opacity="0.55"/>
</svg>
<div id="fly" class="abs"></div><div id="trk" class="abs"></div><div id="trkf" class="abs"></div>
<div id="win" class="abs"></div>
<div id="srch" class="abs"></div><div id="ava" class="abs"></div><div id="sel" class="abs"></div><div id="acc" class="abs"></div>
<div id="clip" class="abs">
<div class="card" style="top:-48.60px;height:93.80px"></div>
<div class="card" style="top:51.60px;height:94.00px"></div>
<div class="card" style="top:152.40px;height:93.20px"></div>
<div class="card" style="top:329.00px;height:92.70px"></div>
<div class="card" style="top:505.10px;height:171.40px"></div>
<div class="abs" style="left:14.5px;top:598.2px;width:940.8px;height:1.1px;background:#e6e8ed"></div>
</div>
<div id="dd" class="abs"></div><div id="sb" class="abs"></div>
<svg id="ico" width="1536" height="1345" viewBox="0 0 1536 1345">
<defs>
<linearGradient id="iroof" x1="0" y1="0" x2="1" y2="1"><stop offset="0" stop-color="#e0902c"/><stop offset="1" stop-color="#b4562a"/></linearGradient>
<linearGradient id="ihouse" x1="0" y1="0" x2="0" y2="1"><stop offset="0" stop-color="#d0d0d2"/><stop offset="1" stop-color="#a2a6a6"/></linearGradient>
<linearGradient id="isys" x1="0" y1="0" x2="1" y2="1"><stop offset="0" stop-color="#35d0e2"/><stop offset="1" stop-color="#1a7cc6"/></linearGradient>
<linearGradient id="iacc" x1="0" y1="0" x2="0" y2="1"><stop offset="0" stop-color="#27bfa8"/><stop offset="1" stop-color="#159e8a"/></linearGradient>
<linearGradient id="iglobe" x1="0" y1="0" x2="1" y2="1"><stop offset="0" stop-color="#36c8e0"/><stop offset="0.5" stop-color="#22a8d8"/><stop offset="1" stop-color="#1668be"/></linearGradient>
<linearGradient id="iclock" x1="0" y1="0" x2="0" y2="1"><stop offset="0" stop-color="#ececf0"/><stop offset="1" stop-color="#c8c8cc"/></linearGradient>
<linearGradient id="igame" x1="0" y1="0" x2="0" y2="1"><stop offset="0" stop-color="#c4c8d0"/><stop offset="1" stop-color="#a4a6ac"/></linearGradient>
<linearGradient id="ishl" x1="0" y1="0" x2="0" y2="1"><stop offset="0" stop-color="#d2d6de"/><stop offset="1" stop-color="#b0b4bc"/></linearGradient>
<linearGradient id="ishr" x1="0" y1="0" x2="0" y2="1"><stop offset="0" stop-color="#b0b6c0"/><stop offset="1" stop-color="#7e848e"/></linearGradient>
<linearGradient id="ibrush" x1="0" y1="0" x2="1" y2="1"><stop offset="0" stop-color="#f5a030"/><stop offset="1" stop-color="#d86a1c"/></linearGradient>
<linearGradient id="idia" x1="0" y1="0" x2="1" y2="1"><stop offset="0" stop-color="#2cb0f0"/><stop offset="1" stop-color="#1580d0"/></linearGradient>
<linearGradient id="iaccs" x1="0" y1="0" x2="0" y2="1"><stop offset="0" stop-color="#2a7cc4"/><stop offset="0.5" stop-color="#168ce0"/><stop offset="1" stop-color="#2070c0"/></linearGradient>
<clipPath id="clipc"><rect x="490" y="490" width="990" height="829"/></clipPath>
</defs>
<g fill="none" stroke="#2b2b2b" stroke-width="1.5" stroke-linejoin="round" stroke-linecap="round">
<path d="M706.4,39.8 L706.4,54.2 L701.6,50.2 L699.4,50.2 Q697.5,50.2 697.5,48.3 L697.5,45.7 Q697.5,43.8 699.4,43.8 L701.6,43.8 Z"/>
<path d="M710.2,43.2 L717.2,50.2 M717.2,43.2 L710.2,50.2" stroke="#555" stroke-width="1.4"/>
</g>
<path d="M94.4,377.4 H79.6 M86.2,370.6 L79.4,377.4 L86.2,384.2" fill="none" stroke="#4a4a4a" stroke-width="1.8" stroke-linecap="round" stroke-linejoin="round"/>
<path d="M1314.6,365.4 H1328.6" stroke="#333" stroke-width="1.7" stroke-linecap="round"/>
<rect x="1378.2" y="359.8" width="12.9" height="12.2" rx="2.2" fill="none" stroke="#2b2b2b" stroke-width="1.8"/>
<path d="M1441.8,359.6 L1455.2,372.2 M1455.2,359.6 L1441.8,372.2" stroke="#333" stroke-width="1.6" stroke-linecap="round"/>
<g fill="none" stroke="#3a3a3a" stroke-width="1.7" stroke-linecap="round"><circle cx="437.2" cy="375.4" r="6.2"/><path d="M441.8,380.2 L447,385.6"/></g>
<circle cx="117" cy="452" r="13" fill="#8c8c8c"/>
<path d="M101.5,468.2 H133 Q136.8,468.2 136.8,472 Q136.8,488 117.3,488 Q97.7,488 97.7,472 Q97.7,468.2 101.5,468.2Z" fill="#8c8c8c"/>
<path d="M655,441.2 L661.6,447.8 L655,454.4" fill="none" stroke="#505050" stroke-width="2.4" stroke-linecap="round" stroke-linejoin="round"/>
<path d="M92,568.6 L103.4,557 L114.8,568.6 L114.8,579.4 L107.4,579.4 L107.4,570 L100.2,570 L100.2,579.4 L92,579.4Z" fill="url(#ihouse)"/>
<path d="M91,566 L103.4,553.6 L116,566" fill="none" stroke="url(#iroof)" stroke-width="3.2" stroke-linecap="round" stroke-linejoin="round"/>
<rect x="91" y="612.4" width="25" height="19" rx="2" fill="url(#isys)"/>
<path d="M91,627.2 H116 V629.4 Q116,631.4 114,631.4 H93 Q91,631.4 91,629.4Z" fill="#05395c"/>
<ellipse cx="103.6" cy="676.8" rx="10.2" ry="13.8" fill="#0f7be0"/>
<path d="M98.6,672.4 L108.2,681 L103.6,685 L103.6,668.6 L108.2,672.6 L98.6,681.2" fill="none" stroke="#e8f8ff" stroke-width="2.3" stroke-linejoin="round" stroke-linecap="round"/>
<path d="M103.4,742 L90.4,728.4 Q103.4,717.6 116.4,728.4Z" fill="#3cc0f4"/>
<path d="M103.4,742 L94.4,732.6 Q103.4,725.4 112.4,732.6Z" fill="#1a92de"/>
<path d="M103.4,742 L98.2,736.4 Q103.4,732.4 108.6,736.4Z" fill="#1060b0"/>
<path d="M115.4,775 L102.4,791" stroke="#878b94" stroke-width="5.6" stroke-linecap="round"/>
<path d="M102.6,788 Q107,790.6 105,795.6 Q101.6,801.6 90.6,800.4 Q95.4,798.4 95.6,793.6 Q96.6,787.6 102.6,788Z" fill="url(#ibrush)"/>
<rect x="91" y="831.8" width="11" height="10.4" fill="#9a9ea6"/>
<rect x="91" y="842.2" width="11" height="11" fill="#3e3f45"/>
<rect x="102" y="842.2" width="11.2" height="11" fill="#77797f"/>
<path d="M108.3,828.6 L115.8,836.2 L108.3,843.8 L100.8,836.2Z" fill="url(#idia)" stroke="url(#idia)" stroke-width="1.2" stroke-linejoin="round"/>
<circle cx="103.6" cy="890.6" r="6.7" fill="url(#iacc)"/>
<path d="M95.2,900.8 H112 Q114.6,900.8 114.6,903.4 Q114.6,911.2 103.6,911.2 Q92.6,911.2 92.6,903.4 Q92.6,900.8 95.2,900.8Z" fill="url(#iacc)"/>
<circle cx="105.6" cy="951.6" r="12" fill="url(#iglobe)"/>
<path d="M109.6,940.6 Q112.6,951.6 109.6,963 M97,955 H117.4" stroke="#5fd0f0" stroke-width="1" fill="none" opacity="0.7"/>
<circle cx="98.4" cy="958.2" r="8.4" fill="url(#iclock)"/>
<path d="M98.8,953.4 V958.6 H102.4" stroke="#555" stroke-width="1.6" fill="none" stroke-linecap="round" stroke-linejoin="round"/>
<rect x="90.2" y="998.8" width="26.8" height="18.2" rx="9.1" fill="url(#igame)"/>
<path d="M97.4,1003.6 V1011 M93.8,1007.3 H101" stroke="#2c2c30" stroke-width="1.7" stroke-linecap="round"/>
<circle cx="110.9" cy="1005" r="2.3" fill="#3a72b0"/><circle cx="108.2" cy="1010.4" r="2.3" fill="#3a72b0"/>
<circle cx="103.4" cy="1052.3" r="2.8" fill="#2a7cc4"/>
<path d="M93,1055 Q98,1057.4 100.6,1057.6 H106.2 Q109,1057.4 114,1055 Q115.6,1056.6 114.4,1058 Q110,1060.2 107.4,1060.8 L107.6,1066 L110.8,1075.6 Q109.6,1077.6 107.6,1076.6 L103.4,1069.4 L99.2,1076.6 Q97.2,1077.6 96,1075.6 L99.2,1066 L99.4,1060.8 Q96.8,1060.2 92.4,1058 Q91.4,1056.4 93,1055Z" fill="url(#iaccs)"/>
<path d="M103.5,1106.6 Q109,1110.4 115.6,1110.6 Q116.8,1125.4 103.5,1130.8 Q90.2,1125.4 91.4,1110.6 Q98,1110.4 103.5,1106.6Z" fill="#8a9098"/>
<path d="M103.5,1108.6 Q98.4,1111.8 93,1112.2 Q92.6,1124 103.5,1128.8Z" fill="url(#ishl)"/>
<path d="M103.5,1108.6 Q108.6,1111.8 114,1112.2 Q114.4,1124 103.5,1128.8Z" fill="url(#ishr)"/>
<circle cx="103.3" cy="1173.9" r="13.7" fill="#1583d8"/>
<g fill="none" stroke="#e6f8ff" stroke-width="2.2" stroke-linecap="butt"><path d="M96.4,1171.6 Q98.2,1166.4 103.6,1166.4 Q107.4,1166.4 109.8,1169.4"/><path d="M110.2,1176.4 Q108.4,1181.4 103,1181.4 Q99.2,1181.4 96.8,1178.4"/></g>
<path d="M111.6,1165.6 V1172 H105.2Z" fill="#e6f8ff"/><path d="M95,1182.2 V1175.8 H101.4Z" fill="#e6f8ff"/>
<g clip-path="url(#clipc)">
<rect x="527.7" y="471.1" width="32.6" height="32.6" rx="5" fill="#0f6fc6"/>
<path d="M535.2,476.9 H553.6 Q555.2,476.9 555.2,478.5 V487.9 H533.6 V478.5 Q533.6,476.9 535.2,476.9Z M544.6,476.9 V498.7 H535.2 Q533.6,498.7 533.6,497.1 V487.9" fill="none" stroke="#82caff" stroke-width="2" stroke-linejoin="round"/>
<rect x="527.7" y="572.1" width="32.6" height="32.6" rx="5" fill="#0f6fc6"/>
<path d="M535.2,577.9 H553.6 Q555.2,577.9 555.2,579.5 V588.9 H533.6 V579.5 Q533.6,577.9 535.2,577.9Z M544.6,577.9 V599.7 H535.2 Q533.6,599.7 533.6,598.1 V588.9" fill="none" stroke="#82caff" stroke-width="2" stroke-linejoin="round"/>
<rect x="1329.5" y="473.3" width="55.5" height="28.2" rx="14.1" fill="#0f64b8"/>
<circle cx="1371" cy="488" r="7.8" fill="#ffffff"/>
<path d="M1408.6,481.4 L1416.2,488.3 L1408.6,495.2" fill="none" stroke="#333" stroke-width="1.9" stroke-linecap="round" stroke-linejoin="round"/>
</g>
<rect x="1330.2" y="575" width="54.2" height="26.9" rx="13.45" fill="#f5f5f7" stroke="#8a8a8a" stroke-width="1.4"/>
<circle cx="1343.4" cy="588.5" r="8.2" fill="#5c5c5c"/>
<path d="M1408.6,582.4 L1416.2,589.3 L1408.6,596.2" fill="none" stroke="#333" stroke-width="1.9" stroke-linecap="round" stroke-linejoin="round"/>
<path d="M1405.6,685.8 L1412.5,693.2 L1419.4,685.8" fill="none" stroke="#333" stroke-width="1.9" stroke-linecap="round" stroke-linejoin="round"/>
<path d="M1405.6,1046.8 L1412.5,1039.4 L1419.4,1046.8" fill="none" stroke="#333" stroke-width="1.9" stroke-linecap="round" stroke-linejoin="round"/>
<path d="M1390.4,863 L1395.8,868.8 L1401.2,863" fill="none" stroke="#6a6a6a" stroke-width="1.4" stroke-linecap="round" stroke-linejoin="round"/>
<path d="M535.39,675.77 L538.41,675.77 L538.67,677.74 L539.88,678.44 L541.71,677.68 L543.22,680.29 L541.65,681.50 L541.65,682.90 L543.22,684.11 L541.71,686.72 L539.88,685.96 L538.67,686.66 L538.41,688.63 L535.39,688.63 L535.13,686.66 L533.92,685.96 L532.09,686.72 L530.58,684.11 L532.15,682.90 L532.15,681.50 L530.58,680.29 L532.09,677.68 L533.92,678.44 L535.13,677.74Z" fill="none" stroke="#3a3a3a" stroke-width="1.7" stroke-linejoin="round"/><circle cx="536.9" cy="682.2" r="0.9" fill="#2a2a2a" stroke="#3a3a3a" stroke-width="0.8"/>
<path d="M547.27,686.61 L550.93,686.61 L551.24,689.01 L552.70,689.85 L554.93,688.92 L556.76,692.09 L554.84,693.55 L554.84,695.25 L556.76,696.71 L554.93,699.88 L552.70,698.95 L551.24,699.79 L550.93,702.19 L547.27,702.19 L546.96,699.79 L545.50,698.95 L543.27,699.88 L541.44,696.71 L543.36,695.25 L543.36,693.55 L541.44,692.09 L543.27,688.92 L545.50,689.85 L546.96,689.01Z" fill="none" stroke="#3a3a3a" stroke-width="1.7" stroke-linejoin="round"/><circle cx="549.1" cy="694.4" r="2.3" fill="none" stroke="#3a3a3a" stroke-width="1.7"/>
<rect x="530.9" y="856.1" width="26.6" height="19.6" rx="3.4" fill="none" stroke="#444" stroke-width="2"/>
<rect x="536.3" y="865" width="15.6" height="5.6" rx="1.6" fill="none" stroke="#2f2f2f" stroke-width="1.8"/>
<g fill="none" stroke="#3a3a3a" stroke-width="1.6" stroke-linecap="round">
<path d="M531.6,1039 A13.2,13.2 0 1 1 547.4,1055"/>
<path d="M531.8,1037.6 H556.6 M545.4,1047.2 H557.4"/>
<path d="M539.6,1030.4 Q543.6,1029 549,1030.2 Q554.4,1042 548.4,1054.6 M539.8,1030.4 Q538.4,1033.4 537.6,1037.4"/>
<circle cx="536.4" cy="1047.4" r="5"/><path d="M540.2,1051.2 L545.4,1056"/>
</g>
<path d="M505.6,1228.6 Q505,1216.6 512.2,1216.2 Q516,1216.2 517.8,1218.8" fill="none" stroke="#3c3c3c" stroke-width="2" stroke-linecap="round"/>
<circle cx="505.8" cy="1228.6" r="2.1" fill="#2a2a2a"/>
<circle cx="517" cy="1228.6" r="7.4" fill="#111"/>
<path d="M520,1232.6 L526.4,1238.2 L517.6,1235.8Z" fill="#111" stroke="#111" stroke-width="1.2" stroke-linejoin="round"/>
<path d="M514.8,1226.2 Q515,1223.6 517.2,1223.6 Q519.4,1223.8 519.2,1225.8 Q519,1227.2 517.2,1228.4 V1229.8" fill="none" stroke="#b8b8b8" stroke-width="1.5"/><rect x="516.2" y="1231.6" width="2" height="1.8" fill="#b8b8b8"/>
<circle cx="510.1" cy="1269.8" r="3.7" fill="#111"/>
<path d="M504,1282.8 Q503.6,1275.2 510.3,1275.2 Q517,1275.2 516.6,1282.8Z" fill="#111"/>
<path d="M513.4,1265 V1263.2 Q513.4,1262.2 514.4,1262.2 H524 Q525,1262.2 525,1263.2 V1268.2 Q525,1269.2 524,1269.2 H518.6 L516.4,1271.6 V1269" fill="none" stroke="#222" stroke-width="1.8" stroke-linejoin="round" stroke-linecap="round"/>
</svg>
<span class="t" style="left:123.60px;top:368.93px;font-size:15.2px;line-height:20px;letter-spacing:0.545px;color:#222222;">Settings</span>
<span class="t s5" style="left:176.18px;top:441.92px;font-size:19px;line-height:25px;letter-spacing:0.291px;color:#222222;">WindowsLatest .com</span>
<span class="t" style="left:136.80px;top:555.32px;font-size:19px;line-height:25px;letter-spacing:0.428px;color:#222222;">Home</span>
<span class="t" style="left:137.80px;top:610.58px;font-size:19px;line-height:25px;letter-spacing:-0.744px;color:#222222;">System</span>
<span class="t" style="left:136.80px;top:665.84px;font-size:19px;line-height:25px;letter-spacing:0.231px;color:#222222;">Bluetooth &amp; devices</span>
<span class="t" style="left:136.80px;top:721.10px;font-size:19px;line-height:25px;letter-spacing:0.458px;color:#222222;">Network &amp; internet</span>
<span class="t" style="left:136.80px;top:776.36px;font-size:19px;line-height:25px;letter-spacing:-0.103px;color:#222222;">Personalization</span>
<span class="t" style="left:137.80px;top:831.62px;font-size:19px;line-height:25px;letter-spacing:-0.302px;color:#222222;">Apps</span>
<span class="t" style="left:137.80px;top:886.88px;font-size:19px;line-height:25px;letter-spacing:-0.107px;color:#222222;">Accounts</span>
<span class="t" style="left:137.80px;top:942.14px;font-size:19px;line-height:25px;letter-spacing:0.188px;color:#222222;">Time &amp; language</span>
<span class="t" style="left:137.80px;top:997.40px;font-size:19px;line-height:25px;letter-spacing:-0.312px;color:#222222;">Gaming</span>
<span class="t" style="left:137.80px;top:1052.66px;font-size:19px;line-height:25px;letter-spacing:-0.223px;color:#222222;">Accessibility</span>
<span class="t" style="left:136.80px;top:1107.92px;font-size:19px;line-height:25px;letter-spacing:-0.063px;color:#222222;">Privacy &amp; security</span>
<span class="t" style="left:137.80px;top:1163.18px;font-size:19px;line-height:25px;letter-spacing:0.150px;color:#222222;">Windows Update</span>
<span class="t" style="left:467.85px;top:366.76px;font-size:18px;line-height:23px;letter-spacing:0.577px;color:#767676;">Find a setting</span>
<span class="t s10" style="left:502.00px;top:424.18px;font-size:37px;line-height:48px;letter-spacing:0.593px;color:#5c5c5c;">System</span>
<span class="t s12" style="left:683.42px;top:424.18px;font-size:37px;line-height:48px;letter-spacing:2.031px;color:#1a1a1a;">Notifications</span>
<span class="t" style="left:584.80px;top:492.83px;font-size:15.5px;line-height:20px;letter-spacing:0.317px;color:#5f5f5f;">Banners, Sounds</span>
<span class="t" style="left:585.60px;top:567.17px;font-size:19px;line-height:25px;letter-spacing:0.337px;color:#222222;">Startup App Notification</span>
<span class="t" style="left:585.80px;top:593.53px;font-size:15.5px;line-height:20px;letter-spacing:0.409px;color:#5f5f5f;">Off</span>
<span class="t" style="left:1285.85px;top:577.67px;font-size:19px;line-height:25px;letter-spacing:0.168px;color:#222222;">Off</span>
<span class="t" style="left:585.85px;top:677.67px;font-size:19px;line-height:25px;letter-spacing:0.269px;color:#222222;">Additional settings</span>
<span class="t s5" style="left:503.93px;top:782.17px;font-size:19px;line-height:25px;letter-spacing:0.454px;color:#222222;">Indicators from keyboard actions</span>
<span class="t" style="left:584.85px;top:842.92px;font-size:19px;line-height:25px;letter-spacing:0.136px;color:#222222;">Position of on-screen indicators</span>
<span class="t" style="left:585.85px;top:869.83px;font-size:15.5px;line-height:20px;letter-spacing:0.685px;color:#5f5f5f;">Volume, brightness and other controls will appear in this location</span>
<span class="t" style="left:1261.35px;top:853.92px;font-size:19px;line-height:25px;letter-spacing:-0.094px;color:#222222;">Top center</span>
<span class="t s5" style="left:503.93px;top:958.92px;font-size:19px;line-height:25px;letter-spacing:0.271px;color:#222222;">Related support</span>
<span class="t" style="left:584.85px;top:1030.92px;font-size:19px;line-height:25px;letter-spacing:0.371px;color:#222222;">Help from the web</span>
<span class="t" style="left:587.10px;top:1116.67px;font-size:19px;line-height:25px;letter-spacing:0.204px;color:#23487f;">Customizing notifications and quick settings</span>
<span class="t" style="left:550.10px;top:1214.67px;font-size:19px;line-height:25px;letter-spacing:-0.030px;color:#23487f;">Get help</span>
<span class="t" style="left:550.10px;top:1259.92px;font-size:19px;line-height:25px;letter-spacing:-0.242px;color:#23487f;">Give feedback</span>
<span class="t" style="left:906.50px;top:34.16px;font-size:18px;line-height:23px;letter-spacing:0.589px;color:#222222;">60</span>
<div class="abs" style="left:490px;top:490px;width:990px;height:20px;overflow:hidden"><span class="t" style="left:795.4px;top:-13.2px;font-size:19px;line-height:25px;letter-spacing:0.3px;color:#222222">On</span></div>
</div></body></html>
